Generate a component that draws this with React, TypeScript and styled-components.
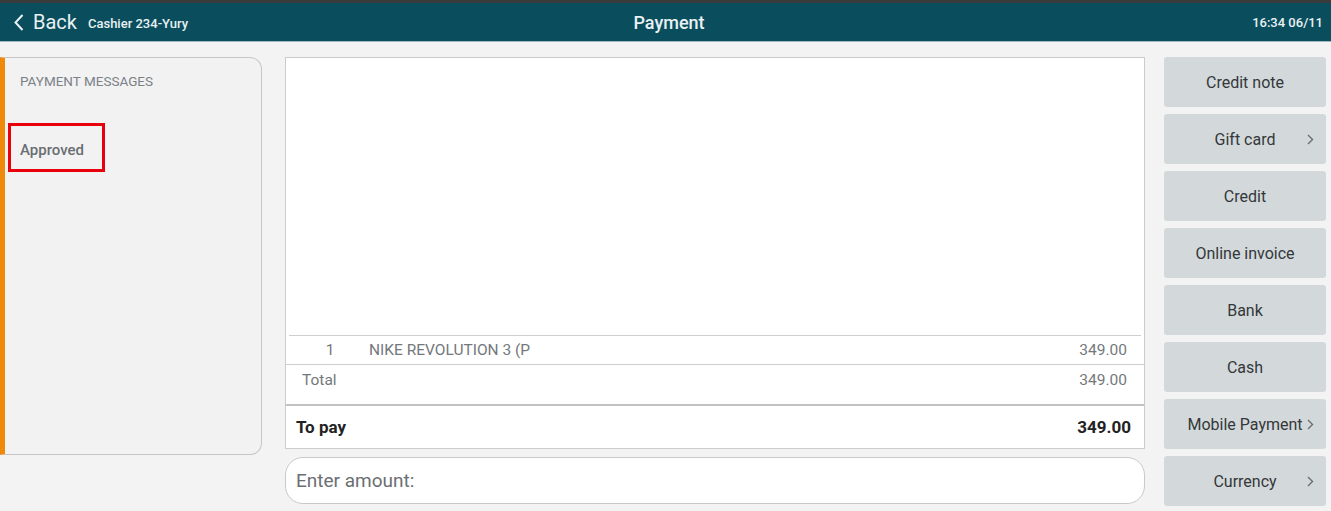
import React from "react";
import styled, { createGlobalStyle } from "styled-components";

const Global = createGlobalStyle`
  html, body { margin: 0; padding: 0; background: #f3f3f3; }
  body { font-family: Roboto, "Liberation Sans", Arial, sans-serif; }
  * { box-sizing: border-box; }
`;

const Page = styled.div`
  width: 1331px;
  height: 511px;
  overflow: hidden;
  background: #f3f3f3;
  display: flex;
  flex-direction: column;
`;

const TopStrip = styled.div`
  height: 3px;
  background: #3a3b3c;
`;

const Header = styled.header`
  height: 39px;
  background: #0a4e5d;
  border-bottom: 1px solid #9fbcc3;
  display: grid;
  grid-template-columns: 1fr auto 1fr;
  align-items: center;
  color: #e8f1f3;
  padding: 0 8px 0 14px;
`;

const HeaderLeft = styled.div`
  display: flex;
  align-items: center;
`;

const BackLink = styled.div`
  display: flex;
  align-items: center;
  gap: 9px;
  font-size: 20px;
  margin-right: 11px;
`;

const Cashier = styled.span`
  font-size: 13px;
  font-weight: 500;
  padding-top: 2px;
`;

const Title = styled.div`
  font-size: 18px;
  font-weight: 500;
  padding-left: 1px;
`;

const Clock = styled.div`
  justify-self: end;
  font-size: 13px;
  font-weight: 500;
`;

const Body = styled.main`
  flex: 1;
  display: flex;
  padding: 15px 5px 0 0;
`;

const MessagesPanel = styled.section`
  width: 262px;
  height: 398px;
  border: 1px solid #c6c6c6;
  border-left: 5px solid #f0880a;
  border-radius: 0 12px 12px 0;
  background: #f2f2f2;
  padding: 15px 0 0 15px;
`;

const PanelTitle = styled.div`
  font-size: 13.5px;
  color: #7c8187;
`;

const MessageBox = styled.div`
  margin: 34px 0 0 -12px;
  width: 97px;
  height: 49px;
  border: 3px solid #e8000d;
  display: flex;
  align-items: center;
  padding: 4px 0 0 9px;
  font-size: 15px;
  font-weight: 500;
  color: #6a6e72;
`;

const Middle = styled.div`
  width: 860px;
  margin-left: 23px;
  display: flex;
  flex-direction: column;
  gap: 8px;
`;

const Receipt = styled.section`
  height: 392px;
  background: #fff;
  border: 1px solid #cbcbcb;
  display: flex;
  flex-direction: column;
  justify-content: flex-end;
`;

const ItemRow = styled.div`
  margin: 0 3px;
  border-top: 1px solid #cfcfcf;
  height: 29px;
  display: grid;
  grid-template-columns: 80px 1fr auto;
  align-items: center;
  font-size: 15.5px;
  color: #74787c;
  padding-right: 14px;
`;

const Qty = styled.span`
  text-align: center;
  padding-left: 2px;
`;

const TotalRow = styled.div`
  border-top: 1px solid #cfcfcf;
  height: 40px;
  display: flex;
  justify-content: space-between;
  align-items: flex-start;
  padding: 6px 17px 0 16px;
  font-size: 15.5px;
  color: #74787c;
`;

const PayRow = styled.div`
  border-top: 2px solid #c2c2c2;
  height: 44px;
  display: flex;
  justify-content: space-between;
  align-items: center;
  padding: 0 13px 0 10px;
  font-size: 17px;
  font-weight: 700;
  color: #222;
`;

const AmountInput = styled.div`
  height: 47px;
  border: 1px solid #c9c9c9;
  border-radius: 18px;
  background: #fff;
  display: flex;
  align-items: center;
  padding-left: 10px;
  font-size: 19px;
  color: #6b6f73;
`;

const Methods = styled.nav`
  width: 162px;
  margin-left: 19px;
  display: flex;
  flex-direction: column;
  gap: 7px;
`;

const MethodButton = styled.div`
  height: 50px;
  border-radius: 3px;
  background: #d3d9da;
  display: flex;
  align-items: center;
  justify-content: center;
  font-size: 16px;
  color: #34373a;
  position: relative;
`;

const Chevron = styled.svg`
  position: absolute;
  right: 12px;
  top: 50%;
  margin-top: -5px;
`;

const methods: { label: string; more?: boolean }[] = [
  { label: "Credit note" },
  { label: "Gift card", more: true },
  { label: "Credit" },
  { label: "Online invoice" },
  { label: "Bank" },
  { label: "Cash" },
  { label: "Mobile Payment", more: true },
  { label: "Currency", more: true },
];

export default function App() {
  return (
    <Page>
      <Global />
      <TopStrip />
      <Header>
        <HeaderLeft>
          <BackLink>
            <svg width="10" height="17" viewBox="0 0 10 17">
              <polyline points="8.5,1 1.5,8.5 8.5,16" fill="none" stroke="#e8f1f3" strokeWidth="2" />
            </svg>
            Back
          </BackLink>
          <Cashier>Cashier 234-Yury</Cashier>
        </HeaderLeft>
        <Title>Payment</Title>
        <Clock>16:34 06/11</Clock>
      </Header>
      <Body>
        <MessagesPanel>
          <PanelTitle>PAYMENT MESSAGES</PanelTitle>
          <MessageBox>Approved</MessageBox>
        </MessagesPanel>
        <Middle>
          <Receipt>
            <ItemRow>
              <Qty>1</Qty>
              <span>NIKE REVOLUTION 3 (P</span>
              <span>349.00</span>
            </ItemRow>
            <TotalRow>
              <span>Total</span>
              <span>349.00</span>
            </TotalRow>
            <PayRow>
              <span>To pay</span>
              <span>349.00</span>
            </PayRow>
          </Receipt>
          <AmountInput>Enter amount:</AmountInput>
        </Middle>
        <Methods>
          {methods.map((m) => (
            <MethodButton key={m.label}>
              {m.label}
              {m.more && (
                <Chevron width="7" height="11" viewBox="0 0 7 11">
                  <polyline points="1,1 5.5,5.5 1,10" fill="none" stroke="#6a6e72" strokeWidth="1.4" />
                </Chevron>
              )}
            </MethodButton>
          ))}
        </Methods>
      </Body>
    </Page>
  );
}
